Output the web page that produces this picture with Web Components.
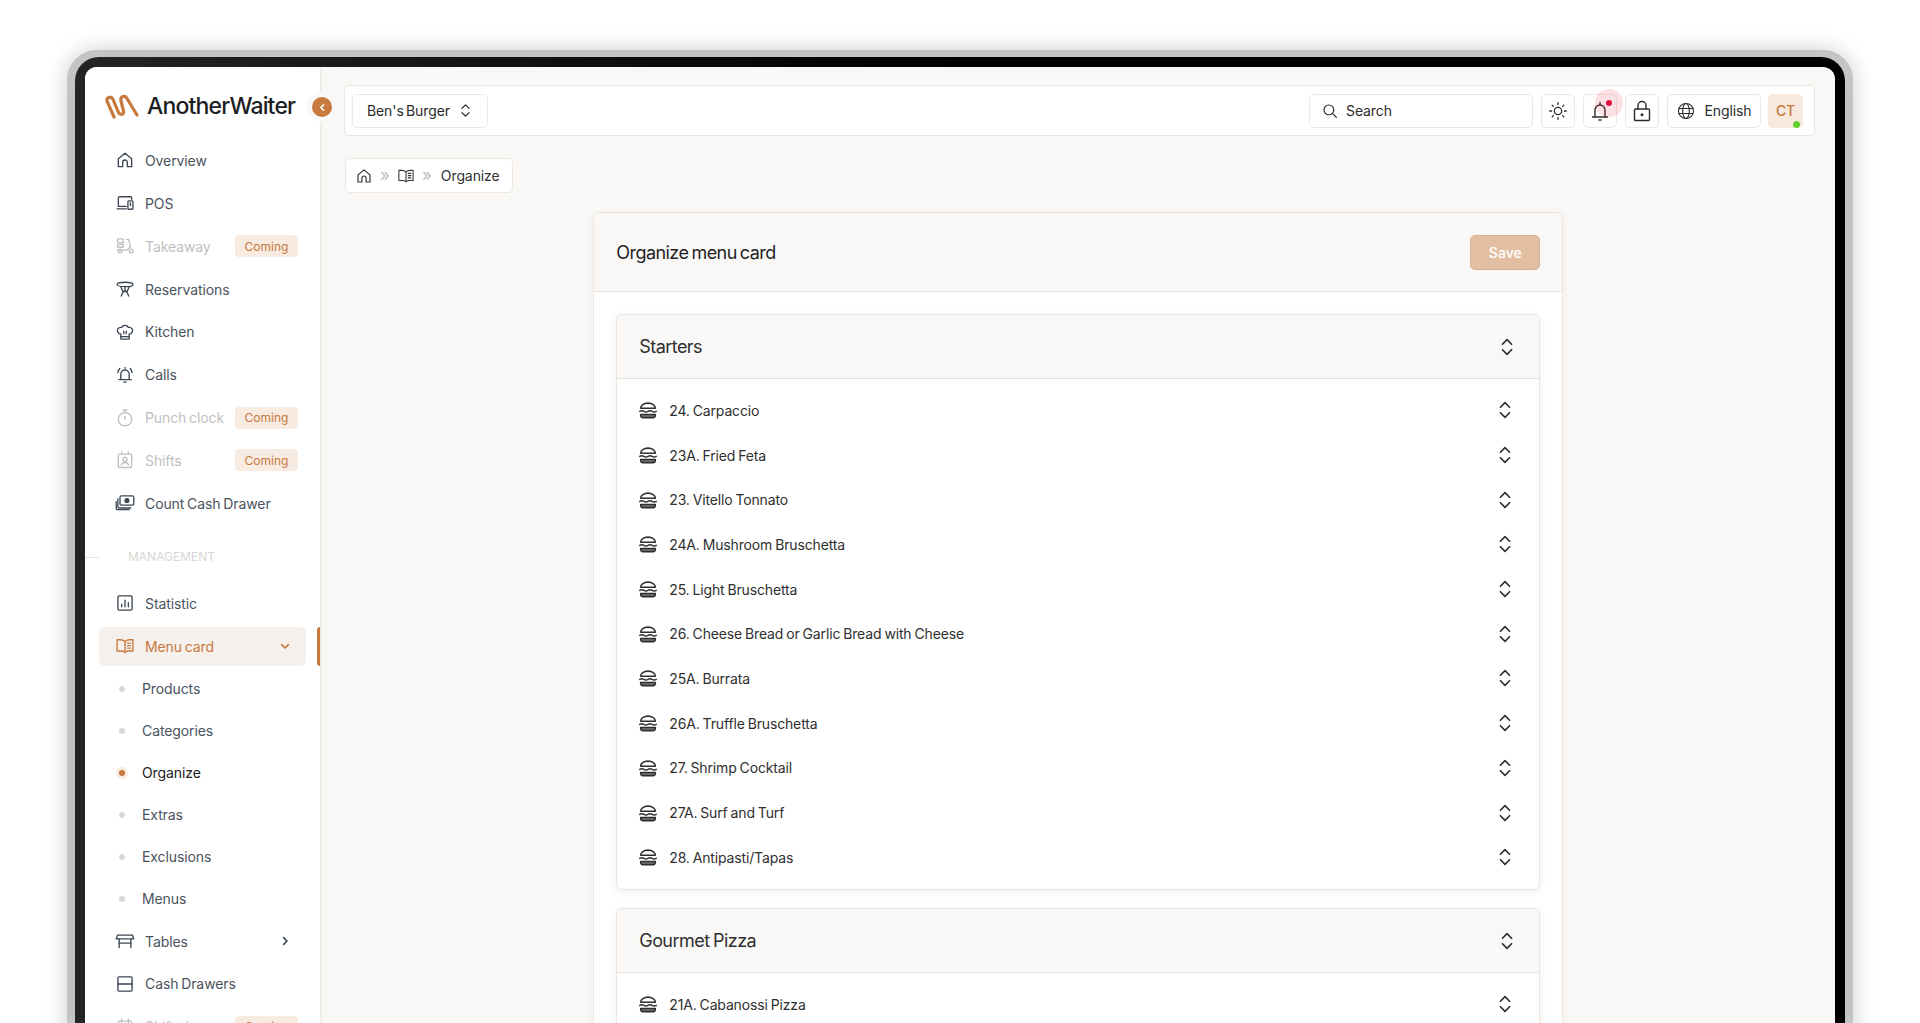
<!DOCTYPE html>
<html lang="en">
<head>
<meta charset="utf-8">
<title>Organize menu card</title>
<style>
  html, body { margin: 0; height: 100%; overflow: hidden; background: #fff; }
  body { font-family: Inter, "Liberation Sans", sans-serif; }
</style>
</head>
<body>
<app-frame>
  <app-sidebar slot="side"></app-sidebar>
  <top-bar></top-bar>
  <bread-crumb></bread-crumb>
  <organize-card>
    <menu-panel title="Starters" items="24. Carpaccio|23A. Fried Feta|23. Vitello Tonnato|24A. Mushroom Bruschetta|25. Light Bruschetta|26. Cheese Bread or Garlic Bread with Cheese|25A. Burrata|26A. Truffle Bruschetta|27. Shrimp Cocktail|27A. Surf and Turf|28. Antipasti/Tapas"></menu-panel>
    <menu-panel title="Gourmet Pizza" items="21A. Cabanossi Pizza"></menu-panel>
  </organize-card>
</app-frame>

<script>
const ICONS = {
  home: '<path d="M4 10.500 12 3.800l8 6.700V20h-5.200v-5.200a2.800 2.800 0 0 0-5.600 0V20H4z"/>',
  pos: '<path d="M4 15V6a1.500 1.500 0 0 1 1.500-1.500h13A1.500 1.500 0 0 1 20 6v1.500"/><path d="M2.500 19h11"/><path d="M4 16h9.500"/><rect x="15.500" y="9.500" width="6" height="10" rx="1"/><path d="M18.500 12v3"/>',
  scooter: '<rect x="3" y="3.500" width="7" height="4.500" rx=".8"/><rect x="3" y="10" width="7" height="3.500" rx=".8"/><path d="M14 4h2.500l2 9"/><path d="M3 17h11l4.500-4"/><circle cx="6" cy="18" r="2.200"/><circle cx="19.500" cy="18" r="2.200"/>',
  table: '<ellipse cx="12" cy="6.500" rx="9.500" ry="2.600"/><path d="M12 9v6"/><path d="M7 9.500l2.500 5.500h5L17 9.500"/><path d="M7.500 20.500 10 15m6.500 5.500L14 15"/>',
  chef: '<path d="M7 14.500C4 14 2.500 11.800 3 9.500 3.500 7 6 6 8 6.500 9 4.500 10.500 4 12 4s3 .5 4 2.500c2-.5 4.500.5 5 3 .5 2.300-1 4.500-4 5V20.500H7z"/><path d="M7 17.500h10"/><path d="M10.500 11v3m3-3v3"/>',
  bell: '<path d="M7 17v-6a5 5 0 0 1 10 0v6"/><path d="M4.500 17.500h15"/><path d="M12 4V3"/><path d="M10.500 20.500h3"/><path d="M3.500 9c.3-2 1-3.500 2.200-4.800"/><path d="M20.500 9c-.3-2-1-3.500-2.200-4.800"/>',
  clock: '<circle cx="12" cy="13.500" r="8"/><path d="M9.500 2.500h5"/><path d="M12 2.500v3"/><path d="M12 10v3.500"/>',
  shift: '<rect x="4" y="5" width="16" height="16" rx="1.500"/><path d="M8 2.500V5m8-2.500V5"/><circle cx="12" cy="11" r="2.500"/><path d="M7.500 18c.8-2 2.500-3 4.500-3s3.700 1 4.500 3"/>',
  cash: '<rect x="6" y="3.500" width="16.500" height="11" rx="1.500"/><circle cx="14.300" cy="9" r="2.300" fill="currentColor"/><path d="M3.500 7v9.500A1.500 1.500 0 0 0 5 18h14"/><path d="M1.500 10.500v8A1.500 1.500 0 0 0 3 20h14"/>',
  stat: '<rect x="3.500" y="3.500" width="17" height="17" rx="1.500"/><path d="M8 16.500v-3M12 16.500v-8M16 16.500v-5"/>',
  book: '<path d="M12 6.500C10.500 5 8.500 4.500 6 4.500H2.500V18H7c2 0 3.700.5 5 1.500 1.300-1 3-1.500 5-1.500h4.500V4.500H18c-2.500 0-4.500.5-6 2z"/><path d="M12 6.500v13"/><path d="M15 8.500h3.500M15 11.500h3.500M15 14.500h3.500"/>',
  bench: '<path d="M3 5h18l1.500 4.500h-21z"/><path d="M5 9.500V20m14-10.500V20"/><path d="M5 14.500h14"/>',
  drawer: '<rect x="3.500" y="3.500" width="17" height="17" rx="1.500"/><path d="M3.500 12h17"/>',
  calendar: '<rect x="4" y="5" width="16" height="16" rx="1.500"/><path d="M8 2.500V7m8-4.500V7M4 10h16"/>',
  down: '<path d="M7 10l5 5 5-5"/>',
  right: '<path d="M10 7l5 5-5 5"/>',
  left: '<path d="M14 7l-5 5 5 5"/>',
  updown: '<path d="M7 9 12 4l5 5"/><path d="M7 15l5 5 5-5"/>',
  burger: '<path d="M4 10c0-3.200 3.500-5.500 8-5.500s8 2.300 8 5.500z"/><path d="M3 13.500c1.500-1 3-1 4.500 0s3 1 4.500 0 3-1 4.500 0 3 1 4.500 0" fill="none"/><path d="M4 17h16v.8a2.500 2.500 0 0 1-2.500 2.500h-11A2.500 2.500 0 0 1 4 17.800z" fill="currentColor" fill-opacity=".65"/>',
  search: '<circle cx="10.500" cy="10.500" r="6.500"/><path d="M15.500 15.500 20.500 20.500"/>',
  sun: '<circle cx="12" cy="12" r="4"/><path d="M12 3v2M12 19v2M3 12h2M19 12h2M5.600 5.600 7 7M17 17l1.400 1.400M5.600 18.400 7 17M17 7l1.400-1.400"/>',
  topbell: '<path d="M7 17.500V11a5 5 0 0 1 10 0v6.500"/><path d="M4.500 18h15"/><path d="M12 5.500V3.500"/><path d="M11 21h2"/>',
  lock: '<rect x="4.500" y="10" width="15" height="11.500" rx="1"/><path d="M8 10V6.500a4 4 0 0 1 8 0V10"/><circle cx="12" cy="15.800" r=".8" fill="currentColor"/>',
  globe: '<circle cx="12" cy="12" r="9"/><ellipse cx="12" cy="12" rx="4" ry="9"/><path d="M3.500 9h17M3.500 15h17"/>'
};

class UiIcon extends HTMLElement {
  connectedCallback() {
    const size = this.getAttribute('size') || 20;
    const stroke = this.getAttribute('stroke') || 1.6;
    this.attachShadow({ mode: 'open' }).innerHTML = `
      <style>
        :host { display: inline-flex; flex: none; width: ${size}px; height: ${size}px; }
        svg { width: 100%; height: 100%; display: block; }
      </style>
      <svg viewBox="0 0 24 24" fill="none" stroke="currentColor" stroke-width="${stroke}" stroke-linecap="round" stroke-linejoin="round">${ICONS[this.getAttribute('name')] || ''}</svg>`;
  }
}
customElements.define('ui-icon', UiIcon);

class AppFrame extends HTMLElement {
  constructor() {
    super();
    this.attachShadow({ mode: 'open' }).innerHTML = `
      <style>
        :host { display: block; height: 1023px; overflow: hidden; padding: 50px 67px 0; box-sizing: border-box; }
        .bezel {
          height: 1100px; padding: 7px 8px 0; box-sizing: border-box;
          background: #c4c4c4; border-radius: 30px 30px 0 0;
          box-shadow: 0 0 22px rgba(0,0,0,.2);
        }
        .black {
          height: 100%; padding: 10px 10px 0; box-sizing: border-box;
          background: linear-gradient(90deg, #242424, #000 50%);
          border-radius: 24px 24px 0 0;
        }
        .screen {
          height: 100%; display: flex; overflow: hidden;
          background: #faf8f6; border-radius: 12px 12px 0 0;
        }
        main { flex: 1; min-width: 0; padding: 18px 20px 0 22px; display: flex; flex-direction: column; align-items: flex-start; }
      </style>
      <div class="bezel"><div class="black"><div class="screen">
        <slot name="side"></slot>
        <main><slot></slot></main>
      </div></div></div>`;
  }
}
customElements.define('app-frame', AppFrame);

class NavItem extends HTMLElement {
  constructor() {
    super();
    this.attachShadow({ mode: 'open' });
  }
  connectedCallback() {
    const soon = this.hasAttribute('soon');
    const active = this.hasAttribute('active');
    const arrow = this.getAttribute('arrow');
    this.shadowRoot.innerHTML = `
      <style>
        :host { display: flex; align-items: center; height: 42.86px; position: relative; }
        .item {
          flex: 1; margin: 0 14px; height: 39px; padding: 0 8px 0 16px;
          display: flex; align-items: center; gap: 10px; border-radius: 6px;
          font-size: 14px; letter-spacing: -.1px; word-spacing: -1px;
          color: ${soon ? '#bdbfc2' : active ? '#c8793d' : '#4a5360'};
          background: ${active ? '#f5f0ec' : 'none'};
        }
        ui-icon { color: ${soon ? '#bdbfc2' : active ? '#c8793d' : '#3c4653'}; }
        span { flex: 1; white-space: nowrap; }
        b {
          font-weight: 400; font-size: 12px; width: 63px; height: 22px; border-radius: 4px;
          display: flex; align-items: center; justify-content: center;
          background: #f8ebe1; color: #c8793d; letter-spacing: 0;
        }
        .bar { position: absolute; right: 0; top: 2px; width: 3px; height: 39px; background: #c8793d; border-radius: 3px 0 0 3px; }
        .arrow { margin-right: 5px; }
      </style>
      <div class="item">
        <ui-icon name="${this.getAttribute('icon')}" size="20"></ui-icon>
        <span><slot></slot></span>
        ${soon ? '<b>Coming</b>' : ''}
        ${arrow ? `<ui-icon class="arrow" name="${arrow}" size="16" stroke="2.400"></ui-icon>` : ''}
      </div>
      ${active ? '<div class="bar"></div>' : ''}`;
  }
}
customElements.define('nav-item', NavItem);

class SubItem extends HTMLElement {
  constructor() {
    super();
    this.attachShadow({ mode: 'open' });
  }
  connectedCallback() {
    const on = this.hasAttribute('active');
    this.shadowRoot.innerHTML = `
      <style>
        :host { display: flex; align-items: center; height: 42px; padding-left: 34px; font-size: 14px; letter-spacing: -.1px; color: ${on ? '#222' : '#4a5360'}; }
        i { width: 6px; height: 6px; border-radius: 50%; margin-right: 17px; background: ${on ? '#c8793d' : '#d9d8d5'}; ${on ? 'box-shadow: 0 0 0 3px #f8ebe1;' : ''} }
      </style>
      <i></i><slot></slot>`;
  }
}
customElements.define('sub-item', SubItem);

class AppSidebar extends HTMLElement {
  constructor() {
    super();
    this.attachShadow({ mode: 'open' }).innerHTML = `
      <style>
        :host { display: block; width: 235px; height: 100%; background: #fff; border-right: 2px solid #f0ece8; position: relative; flex: none; }
        .logo { display: flex; align-items: center; gap: 8px; height: 26px; padding: 26px 0 20px 20px; }
        .logo svg { width: 34px; height: 26px; flex: none; }
        .logo span { font-size: 23px; font-weight: 500; letter-spacing: -.82px; color: #1d1d1f; white-space: nowrap; }
        .toggle {
          position: absolute; left: 227px; top: 30px; width: 20px; height: 20px; border-radius: 50%;
          background: #c8793d; color: #fff; box-shadow: 0 0 0 5px #faf8f6;
          display: flex; align-items: center; justify-content: center;
        }
        .label { height: 57.200px; position: relative; display: flex; align-items: center; padding: 7px 0 0 43px; box-sizing: border-box; font-size: 12px; color: #d8d6d2; letter-spacing: 0; }
        .label::before { content: ""; position: absolute; left: 0; top: 32px; width: 14px; height: 1px; background: #e6e3df; }
      </style>
      <div class="logo">
        <svg viewBox="0 0 34 26" fill="none" stroke="#c8793d" stroke-width="3.200" stroke-linecap="round" stroke-linejoin="round">
          <path d="M9 24 2.200 8.500C.8 4.500 6 2.500 8 6.500l5.500 13c1.500 3 6 2.500 5-1.500L16 8c-1-4.500 4-6.500 6-2.500L32 22"/>
        </svg>
        <span>AnotherWaiter</span>
      </div>
      <div class="toggle"><ui-icon name="left" size="13" stroke="3"></ui-icon></div>
      <nav-item icon="home">Overview</nav-item>
      <nav-item icon="pos">POS</nav-item>
      <nav-item icon="scooter" soon>Takeaway</nav-item>
      <nav-item icon="table">Reservations</nav-item>
      <nav-item icon="chef">Kitchen</nav-item>
      <nav-item icon="bell">Calls</nav-item>
      <nav-item icon="clock" soon>Punch clock</nav-item>
      <nav-item icon="shift" soon>Shifts</nav-item>
      <nav-item icon="cash">Count Cash Drawer</nav-item>
      <div class="label">MANAGEMENT</div>
      <nav-item icon="stat">Statistic</nav-item>
      <nav-item icon="book" active arrow="down">Menu card</nav-item>
      <sub-item>Products</sub-item>
      <sub-item>Categories</sub-item>
      <sub-item active>Organize</sub-item>
      <sub-item>Extras</sub-item>
      <sub-item>Exclusions</sub-item>
      <sub-item>Menus</sub-item>
      <nav-item icon="bench" arrow="right">Tables</nav-item>
      <nav-item icon="drawer">Cash Drawers</nav-item>
      <nav-item icon="calendar" soon>Shift plan</nav-item>`;
  }
}
customElements.define('app-sidebar', AppSidebar);

class TopBar extends HTMLElement {
  constructor() {
    super();
    this.attachShadow({ mode: 'open' }).innerHTML = `
      <style>
        :host {
          display: flex; align-items: center; gap: 8px; align-self: stretch;
          height: 51px; padding: 0 11px 0 7px; box-sizing: border-box;
          background: #fff; border: 1px solid #eee7df; border-radius: 4px;
          font-size: 14px; color: #2b2b2b; letter-spacing: -.1px;
        }
        .btn {
          height: 34px; box-sizing: border-box; border: 1px solid #eee7df; border-radius: 5px; background: #fff;
          display: flex; align-items: center; justify-content: center; flex: none; position: relative;
        }
        .venue { width: 136px; justify-content: flex-start; padding-left: 14px; gap: 7px; margin-right: auto; word-spacing: -1.500px; }
        .search { width: 224px; justify-content: flex-start; padding-left: 11px; gap: 7px; }
        .square { width: 34px; }
        .lang { width: 94px; gap: 8px; }
        .me { width: 35px; margin-left: -1px; background: #f7e9de; border-color: #f7e9de; color: #c8793d; font-weight: 500; font-size: 14px; }
        .me::after { content: ""; position: absolute; width: 7px; height: 7px; border-radius: 50%; background: #5fd02c; right: 2px; bottom: -1px; }
        .halo { position: absolute; left: 11px; top: -6px; width: 28px; height: 28px; border-radius: 50%; background: rgba(236,60,90,.16); }
        .dot { position: absolute; left: 22px; top: 5px; width: 6px; height: 6px; border-radius: 50%; background: #e0123f; }
      </style>
      <div class="btn venue"><span>Ben's Burger</span><ui-icon name="updown" size="17" stroke="1.800"></ui-icon></div>
      <div class="btn search"><ui-icon name="search" size="18"></ui-icon><span>Search</span></div>
      <div class="btn square"><ui-icon name="sun" size="22" stroke="1.400"></ui-icon></div>
      <div class="btn square"><ui-icon name="topbell" size="24" stroke="1.400"></ui-icon><i class="halo"></i><i class="dot"></i></div>
      <div class="btn square"><ui-icon name="lock" size="24" stroke="1.400"></ui-icon></div>
      <div class="btn lang"><ui-icon name="globe" size="20" stroke="1.300"></ui-icon><span>English</span></div>
      <div class="btn me">CT</div>`;
  }
}
customElements.define('top-bar', TopBar);

class BreadCrumb extends HTMLElement {
  constructor() {
    super();
    this.attachShadow({ mode: 'open' }).innerHTML = `
      <style>
        :host {
          display: flex; align-items: center; gap: 6px; height: 35px; box-sizing: border-box;
          margin: 22px 0 19px 1px; padding: 0 12px 0 9px;
          background: #fff; border: 1px solid #eee7df; border-radius: 5px;
          font-size: 14px; letter-spacing: -.1px; color: #333;
        }
        .sep { color: #bcbcbc; font-size: 17px; line-height: 1; width: 12px; text-align: center; }
        .here { margin-left: -2px; }
      </style>
      <ui-icon name="home" size="18"></ui-icon>
      <span class="sep">»</span>
      <ui-icon name="book" size="18" stroke="1.400"></ui-icon>
      <span class="sep">»</span>
      <span class="here">&nbsp;Organize</span>`;
  }
}
customElements.define('bread-crumb', BreadCrumb);

class OrganizeCard extends HTMLElement {
  constructor() {
    super();
    this.attachShadow({ mode: 'open' }).innerHTML = `
      <style>
        :host {
          display: block; align-self: center; width: 970px; margin-right: 2.500px; box-sizing: border-box; flex: none;
          background: #fff; border: 1px solid #ebe5dd; border-radius: 6px;
          box-shadow: 0 2px 8px rgba(60,40,20,.05);
        }
        header {
          display: flex; align-items: center; justify-content: space-between; height: 78px;
          padding: 0 22px; background: #faf8f6; border-bottom: 1px solid #e8e2da; border-radius: 6px 6px 0 0;
        }
        h2 { margin: 0; font-size: 18px; font-weight: 400; letter-spacing: -.55px; word-spacing: -1.500px; color: #1f1f1f; }
        button {
          width: 70px; height: 35px; border: 1px solid #d8b497; border-radius: 5px;
          background: #e2bfa2; color: #fff; font: 500 14px Inter, sans-serif;
        }
        .body { padding: 22px 22px 0; display: flex; flex-direction: column; gap: 18.500px; }
      </style>
      <header><h2>Organize menu card</h2><button>Save</button></header>
      <div class="body"><slot></slot></div>`;
  }
}
customElements.define('organize-card', OrganizeCard);

class MenuPanel extends HTMLElement {
  constructor() {
    super();
    this.attachShadow({ mode: 'open' });
  }
  connectedCallback() {
    const rows = this.getAttribute('items').split('|').map(name => `
      <div class="row">
        <ui-icon name="burger" size="22" stroke="1.700"></ui-icon>
        <span>${name}</span>
        <ui-icon name="updown" size="22" stroke="1.800"></ui-icon>
      </div>`).join('');
    this.shadowRoot.innerHTML = `
      <style>
        :host {
          display: block; background: #fff; border: 1px solid #ebe5dd; border-radius: 6px;
          box-shadow: 0 2px 8px rgba(60,40,20,.07); color: #2f2f2f;
        }
        .head {
          display: flex; align-items: center; justify-content: space-between; height: 63px;
          padding: 0 21px 0 22px; background: #faf8f6; border-bottom: 1px solid #e8e2da; border-radius: 6px 6px 0 0;
          font-size: 18px; letter-spacing: -.55px; word-spacing: -1px;
        }
        .rows { padding: 9px 0; }
        .row {
          display: flex; align-items: center; gap: 10px; height: 44.700px; padding: 0 23px 0 20px;
          font-size: 14px; letter-spacing: -.15px; word-spacing: -.8px;
        }
        .row span { flex: 1; }
      </style>
      <div class="head"><span>${this.getAttribute('title')}</span><ui-icon name="updown" size="22" stroke="1.800"></ui-icon></div>
      <div class="rows">${rows}</div>`;
  }
}
customElements.define('menu-panel', MenuPanel);
</script>
</body>
</html>
